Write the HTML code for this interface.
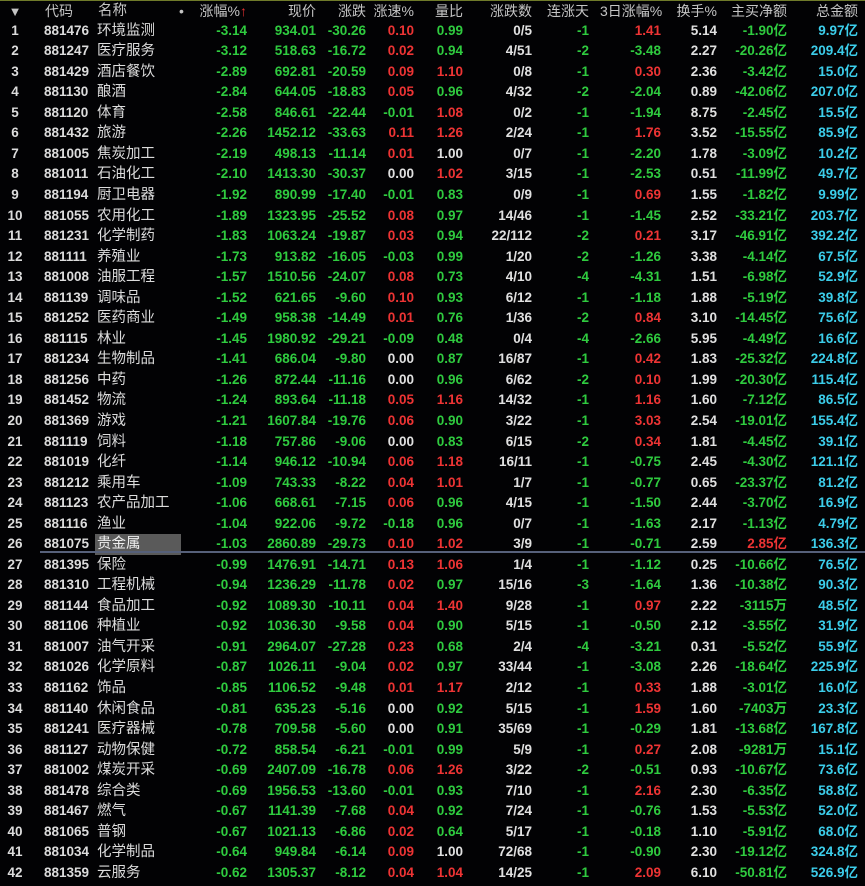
<!DOCTYPE html>
<html><head><meta charset="utf-8"><style>
*{margin:0;padding:0;box-sizing:border-box}
body{width:865px;height:886px;background:#020204;overflow:hidden;position:relative;font-family:"Liberation Sans","Noto Sans CJK SC",sans-serif;font-size:13.5px;color:#dcdcdc}
.top{position:absolute;left:0;top:0;width:865px;height:1px;background:#6f7a2a}
.r{position:absolute;left:0;width:865px;height:20.54px;line-height:20.54px;white-space:nowrap;font-weight:bold}
.r span{position:absolute;top:0;text-align:right}
.h{top:1px;height:21px;line-height:21px;color:#c4c4c4;font-size:14px;font-weight:normal}
.a{left:4px;width:22px;text-align:center!important}
.b{left:44px}
.c{left:97px;text-align:left!important;font-size:14.5px;font-weight:normal}
.d{left:187px;width:60px}.e{left:256px;width:60px}.f{left:316px;width:50px}.g{left:366px;width:48px}
.hh{left:414px;width:49px}.i{left:470px;width:62px}.j{left:540px;width:49px}.k{left:600px;width:61px}
.l{left:665px;width:52px}.m{left:715px;width:72px}.n{left:785px;width:73px}
.G{color:#2fcb3f}.R{color:#ee3434}.W{color:#e0e0e0}.C{color:#3ccdea}
.sel{background:#5a5a5a;color:#eee;width:86px;left:95px!important;padding-left:2px}
.sep{position:absolute;left:40px;top:551px;width:825px;height:2px;background:#56607a}
</style></head><body>
<div class="top"></div>
<div class="r h"><span class="a" style="font-size:13px">▼</span><span class="b" style="left:45px">代码</span><span class="c" style="left:98px">名称</span><span style="left:179px">•</span><span class="d">涨幅%<b style="color:#e03030">↑</b></span><span class="e">现价</span><span class="f">涨跌</span><span class="g">涨速%</span><span class="hh">量比</span><span class="i">涨跌数</span><span class="j">连涨天</span><span class="k">3日涨幅%</span><span class="l">换手%</span><span class="m">主买净额</span><span class="n">总金额</span></div>
<div class="r" style="top:20.7px"><span class="a">1</span><span class="b">881476</span><span class="c">环境监测</span><span class="d G">-3.14</span><span class="e G">934.01</span><span class="f G">-30.26</span><span class="g R">0.10</span><span class="hh G">0.99</span><span class="i W">0/5</span><span class="j G">-1</span><span class="k R">1.41</span><span class="l W">5.14</span><span class="m G">-1.90亿</span><span class="n C">9.97亿</span></div>
<div class="r" style="top:41.24px"><span class="a">2</span><span class="b">881247</span><span class="c">医疗服务</span><span class="d G">-3.12</span><span class="e G">518.63</span><span class="f G">-16.72</span><span class="g R">0.02</span><span class="hh G">0.94</span><span class="i W">4/51</span><span class="j G">-2</span><span class="k G">-3.48</span><span class="l W">2.27</span><span class="m G">-20.26亿</span><span class="n C">209.4亿</span></div>
<div class="r" style="top:61.78px"><span class="a">3</span><span class="b">881429</span><span class="c">酒店餐饮</span><span class="d G">-2.89</span><span class="e G">692.81</span><span class="f G">-20.59</span><span class="g R">0.09</span><span class="hh R">1.10</span><span class="i W">0/8</span><span class="j G">-1</span><span class="k R">0.30</span><span class="l W">2.36</span><span class="m G">-3.42亿</span><span class="n C">15.0亿</span></div>
<div class="r" style="top:82.32px"><span class="a">4</span><span class="b">881130</span><span class="c">酿酒</span><span class="d G">-2.84</span><span class="e G">644.05</span><span class="f G">-18.83</span><span class="g R">0.05</span><span class="hh G">0.96</span><span class="i W">4/32</span><span class="j G">-2</span><span class="k G">-2.04</span><span class="l W">0.89</span><span class="m G">-42.06亿</span><span class="n C">207.0亿</span></div>
<div class="r" style="top:102.86px"><span class="a">5</span><span class="b">881120</span><span class="c">体育</span><span class="d G">-2.58</span><span class="e G">846.61</span><span class="f G">-22.44</span><span class="g G">-0.01</span><span class="hh R">1.08</span><span class="i W">0/2</span><span class="j G">-1</span><span class="k G">-1.94</span><span class="l W">8.75</span><span class="m G">-2.45亿</span><span class="n C">15.5亿</span></div>
<div class="r" style="top:123.4px"><span class="a">6</span><span class="b">881432</span><span class="c">旅游</span><span class="d G">-2.26</span><span class="e G">1452.12</span><span class="f G">-33.63</span><span class="g R">0.11</span><span class="hh R">1.26</span><span class="i W">2/24</span><span class="j G">-1</span><span class="k R">1.76</span><span class="l W">3.52</span><span class="m G">-15.55亿</span><span class="n C">85.9亿</span></div>
<div class="r" style="top:143.94px"><span class="a">7</span><span class="b">881005</span><span class="c">焦炭加工</span><span class="d G">-2.19</span><span class="e G">498.13</span><span class="f G">-11.14</span><span class="g R">0.01</span><span class="hh W">1.00</span><span class="i W">0/7</span><span class="j G">-1</span><span class="k G">-2.20</span><span class="l W">1.78</span><span class="m G">-3.09亿</span><span class="n C">10.2亿</span></div>
<div class="r" style="top:164.48px"><span class="a">8</span><span class="b">881011</span><span class="c">石油化工</span><span class="d G">-2.10</span><span class="e G">1413.30</span><span class="f G">-30.37</span><span class="g W">0.00</span><span class="hh R">1.02</span><span class="i W">3/15</span><span class="j G">-1</span><span class="k G">-2.53</span><span class="l W">0.51</span><span class="m G">-11.99亿</span><span class="n C">49.7亿</span></div>
<div class="r" style="top:185.02px"><span class="a">9</span><span class="b">881194</span><span class="c">厨卫电器</span><span class="d G">-1.92</span><span class="e G">890.99</span><span class="f G">-17.40</span><span class="g G">-0.01</span><span class="hh G">0.83</span><span class="i W">0/9</span><span class="j G">-1</span><span class="k R">0.69</span><span class="l W">1.55</span><span class="m G">-1.82亿</span><span class="n C">9.99亿</span></div>
<div class="r" style="top:205.56px"><span class="a">10</span><span class="b">881055</span><span class="c">农用化工</span><span class="d G">-1.89</span><span class="e G">1323.95</span><span class="f G">-25.52</span><span class="g R">0.08</span><span class="hh G">0.97</span><span class="i W">14/46</span><span class="j G">-1</span><span class="k G">-1.45</span><span class="l W">2.52</span><span class="m G">-33.21亿</span><span class="n C">203.7亿</span></div>
<div class="r" style="top:226.1px"><span class="a">11</span><span class="b">881231</span><span class="c">化学制药</span><span class="d G">-1.83</span><span class="e G">1063.24</span><span class="f G">-19.87</span><span class="g R">0.03</span><span class="hh G">0.94</span><span class="i W">22/112</span><span class="j G">-2</span><span class="k R">0.21</span><span class="l W">3.17</span><span class="m G">-46.91亿</span><span class="n C">392.2亿</span></div>
<div class="r" style="top:246.64px"><span class="a">12</span><span class="b">881111</span><span class="c">养殖业</span><span class="d G">-1.73</span><span class="e G">913.82</span><span class="f G">-16.05</span><span class="g G">-0.03</span><span class="hh G">0.99</span><span class="i W">1/20</span><span class="j G">-2</span><span class="k G">-1.26</span><span class="l W">3.38</span><span class="m G">-4.14亿</span><span class="n C">67.5亿</span></div>
<div class="r" style="top:267.18px"><span class="a">13</span><span class="b">881008</span><span class="c">油服工程</span><span class="d G">-1.57</span><span class="e G">1510.56</span><span class="f G">-24.07</span><span class="g R">0.08</span><span class="hh G">0.73</span><span class="i W">4/10</span><span class="j G">-4</span><span class="k G">-4.31</span><span class="l W">1.51</span><span class="m G">-6.98亿</span><span class="n C">52.9亿</span></div>
<div class="r" style="top:287.72px"><span class="a">14</span><span class="b">881139</span><span class="c">调味品</span><span class="d G">-1.52</span><span class="e G">621.65</span><span class="f G">-9.60</span><span class="g R">0.10</span><span class="hh G">0.93</span><span class="i W">6/12</span><span class="j G">-1</span><span class="k G">-1.18</span><span class="l W">1.88</span><span class="m G">-5.19亿</span><span class="n C">39.8亿</span></div>
<div class="r" style="top:308.26px"><span class="a">15</span><span class="b">881252</span><span class="c">医药商业</span><span class="d G">-1.49</span><span class="e G">958.38</span><span class="f G">-14.49</span><span class="g R">0.01</span><span class="hh G">0.76</span><span class="i W">1/36</span><span class="j G">-2</span><span class="k R">0.84</span><span class="l W">3.10</span><span class="m G">-14.45亿</span><span class="n C">75.6亿</span></div>
<div class="r" style="top:328.8px"><span class="a">16</span><span class="b">881115</span><span class="c">林业</span><span class="d G">-1.45</span><span class="e G">1980.92</span><span class="f G">-29.21</span><span class="g G">-0.09</span><span class="hh G">0.48</span><span class="i W">0/4</span><span class="j G">-4</span><span class="k G">-2.66</span><span class="l W">5.95</span><span class="m G">-4.49亿</span><span class="n C">16.6亿</span></div>
<div class="r" style="top:349.34px"><span class="a">17</span><span class="b">881234</span><span class="c">生物制品</span><span class="d G">-1.41</span><span class="e G">686.04</span><span class="f G">-9.80</span><span class="g W">0.00</span><span class="hh G">0.87</span><span class="i W">16/87</span><span class="j G">-1</span><span class="k R">0.42</span><span class="l W">1.83</span><span class="m G">-25.32亿</span><span class="n C">224.8亿</span></div>
<div class="r" style="top:369.88px"><span class="a">18</span><span class="b">881256</span><span class="c">中药</span><span class="d G">-1.26</span><span class="e G">872.44</span><span class="f G">-11.16</span><span class="g W">0.00</span><span class="hh G">0.96</span><span class="i W">6/62</span><span class="j G">-2</span><span class="k R">0.10</span><span class="l W">1.99</span><span class="m G">-20.30亿</span><span class="n C">115.4亿</span></div>
<div class="r" style="top:390.42px"><span class="a">19</span><span class="b">881452</span><span class="c">物流</span><span class="d G">-1.24</span><span class="e G">893.64</span><span class="f G">-11.18</span><span class="g R">0.05</span><span class="hh R">1.16</span><span class="i W">14/32</span><span class="j G">-1</span><span class="k R">1.16</span><span class="l W">1.60</span><span class="m G">-7.12亿</span><span class="n C">86.5亿</span></div>
<div class="r" style="top:410.96px"><span class="a">20</span><span class="b">881369</span><span class="c">游戏</span><span class="d G">-1.21</span><span class="e G">1607.84</span><span class="f G">-19.76</span><span class="g R">0.06</span><span class="hh G">0.90</span><span class="i W">3/22</span><span class="j G">-1</span><span class="k R">3.03</span><span class="l W">2.54</span><span class="m G">-19.01亿</span><span class="n C">155.4亿</span></div>
<div class="r" style="top:431.5px"><span class="a">21</span><span class="b">881119</span><span class="c">饲料</span><span class="d G">-1.18</span><span class="e G">757.86</span><span class="f G">-9.06</span><span class="g W">0.00</span><span class="hh G">0.83</span><span class="i W">6/15</span><span class="j G">-2</span><span class="k R">0.34</span><span class="l W">1.81</span><span class="m G">-4.45亿</span><span class="n C">39.1亿</span></div>
<div class="r" style="top:452.04px"><span class="a">22</span><span class="b">881019</span><span class="c">化纤</span><span class="d G">-1.14</span><span class="e G">946.12</span><span class="f G">-10.94</span><span class="g R">0.06</span><span class="hh R">1.18</span><span class="i W">16/11</span><span class="j G">-1</span><span class="k G">-0.75</span><span class="l W">2.45</span><span class="m G">-4.30亿</span><span class="n C">121.1亿</span></div>
<div class="r" style="top:472.58px"><span class="a">23</span><span class="b">881212</span><span class="c">乘用车</span><span class="d G">-1.09</span><span class="e G">743.33</span><span class="f G">-8.22</span><span class="g R">0.04</span><span class="hh R">1.01</span><span class="i W">1/7</span><span class="j G">-1</span><span class="k G">-0.77</span><span class="l W">0.65</span><span class="m G">-23.37亿</span><span class="n C">81.2亿</span></div>
<div class="r" style="top:493.12px"><span class="a">24</span><span class="b">881123</span><span class="c">农产品加工</span><span class="d G">-1.06</span><span class="e G">668.61</span><span class="f G">-7.15</span><span class="g R">0.06</span><span class="hh G">0.96</span><span class="i W">4/15</span><span class="j G">-1</span><span class="k G">-1.50</span><span class="l W">2.44</span><span class="m G">-3.70亿</span><span class="n C">16.9亿</span></div>
<div class="r" style="top:513.66px"><span class="a">25</span><span class="b">881116</span><span class="c">渔业</span><span class="d G">-1.04</span><span class="e G">922.06</span><span class="f G">-9.72</span><span class="g G">-0.18</span><span class="hh G">0.96</span><span class="i W">0/7</span><span class="j G">-1</span><span class="k G">-1.63</span><span class="l W">2.17</span><span class="m G">-1.13亿</span><span class="n C">4.79亿</span></div>
<div class="r" style="top:534.2px"><span class="a">26</span><span class="b">881075</span><span class="c sel">贵金属</span><span class="d G">-1.03</span><span class="e G">2860.89</span><span class="f G">-29.73</span><span class="g R">0.10</span><span class="hh R">1.02</span><span class="i W">3/9</span><span class="j G">-1</span><span class="k G">-0.71</span><span class="l W">2.59</span><span class="m R">2.85亿</span><span class="n C">136.3亿</span></div>
<div class="sep"></div>
<div class="r" style="top:554.74px"><span class="a">27</span><span class="b">881395</span><span class="c">保险</span><span class="d G">-0.99</span><span class="e G">1476.91</span><span class="f G">-14.71</span><span class="g R">0.13</span><span class="hh R">1.06</span><span class="i W">1/4</span><span class="j G">-1</span><span class="k G">-1.12</span><span class="l W">0.25</span><span class="m G">-10.66亿</span><span class="n C">76.5亿</span></div>
<div class="r" style="top:575.28px"><span class="a">28</span><span class="b">881310</span><span class="c">工程机械</span><span class="d G">-0.94</span><span class="e G">1236.29</span><span class="f G">-11.78</span><span class="g R">0.02</span><span class="hh G">0.97</span><span class="i W">15/16</span><span class="j G">-3</span><span class="k G">-1.64</span><span class="l W">1.36</span><span class="m G">-10.38亿</span><span class="n C">90.3亿</span></div>
<div class="r" style="top:595.82px"><span class="a">29</span><span class="b">881144</span><span class="c">食品加工</span><span class="d G">-0.92</span><span class="e G">1089.30</span><span class="f G">-10.11</span><span class="g R">0.04</span><span class="hh R">1.40</span><span class="i W">9/28</span><span class="j G">-1</span><span class="k R">0.97</span><span class="l W">2.22</span><span class="m G">-3115万</span><span class="n C">48.5亿</span></div>
<div class="r" style="top:616.36px"><span class="a">30</span><span class="b">881106</span><span class="c">种植业</span><span class="d G">-0.92</span><span class="e G">1036.30</span><span class="f G">-9.58</span><span class="g R">0.04</span><span class="hh G">0.90</span><span class="i W">5/15</span><span class="j G">-1</span><span class="k G">-0.50</span><span class="l W">2.12</span><span class="m G">-3.55亿</span><span class="n C">31.9亿</span></div>
<div class="r" style="top:636.9px"><span class="a">31</span><span class="b">881007</span><span class="c">油气开采</span><span class="d G">-0.91</span><span class="e G">2964.07</span><span class="f G">-27.28</span><span class="g R">0.23</span><span class="hh G">0.68</span><span class="i W">2/4</span><span class="j G">-4</span><span class="k G">-3.21</span><span class="l W">0.31</span><span class="m G">-5.52亿</span><span class="n C">55.9亿</span></div>
<div class="r" style="top:657.44px"><span class="a">32</span><span class="b">881026</span><span class="c">化学原料</span><span class="d G">-0.87</span><span class="e G">1026.11</span><span class="f G">-9.04</span><span class="g R">0.02</span><span class="hh G">0.97</span><span class="i W">33/44</span><span class="j G">-1</span><span class="k G">-3.08</span><span class="l W">2.26</span><span class="m G">-18.64亿</span><span class="n C">225.9亿</span></div>
<div class="r" style="top:677.98px"><span class="a">33</span><span class="b">881162</span><span class="c">饰品</span><span class="d G">-0.85</span><span class="e G">1106.52</span><span class="f G">-9.48</span><span class="g R">0.01</span><span class="hh R">1.17</span><span class="i W">2/12</span><span class="j G">-1</span><span class="k R">0.33</span><span class="l W">1.88</span><span class="m G">-3.01亿</span><span class="n C">16.0亿</span></div>
<div class="r" style="top:698.52px"><span class="a">34</span><span class="b">881140</span><span class="c">休闲食品</span><span class="d G">-0.81</span><span class="e G">635.23</span><span class="f G">-5.16</span><span class="g W">0.00</span><span class="hh G">0.92</span><span class="i W">5/15</span><span class="j G">-1</span><span class="k R">1.59</span><span class="l W">1.60</span><span class="m G">-7403万</span><span class="n C">23.3亿</span></div>
<div class="r" style="top:719.06px"><span class="a">35</span><span class="b">881241</span><span class="c">医疗器械</span><span class="d G">-0.78</span><span class="e G">709.58</span><span class="f G">-5.60</span><span class="g W">0.00</span><span class="hh G">0.91</span><span class="i W">35/69</span><span class="j G">-1</span><span class="k G">-0.29</span><span class="l W">1.81</span><span class="m G">-13.68亿</span><span class="n C">167.8亿</span></div>
<div class="r" style="top:739.6px"><span class="a">36</span><span class="b">881127</span><span class="c">动物保健</span><span class="d G">-0.72</span><span class="e G">858.54</span><span class="f G">-6.21</span><span class="g G">-0.01</span><span class="hh G">0.99</span><span class="i W">5/9</span><span class="j G">-1</span><span class="k R">0.27</span><span class="l W">2.08</span><span class="m G">-9281万</span><span class="n C">15.1亿</span></div>
<div class="r" style="top:760.14px"><span class="a">37</span><span class="b">881002</span><span class="c">煤炭开采</span><span class="d G">-0.69</span><span class="e G">2407.09</span><span class="f G">-16.78</span><span class="g R">0.06</span><span class="hh R">1.26</span><span class="i W">3/22</span><span class="j G">-2</span><span class="k G">-0.51</span><span class="l W">0.93</span><span class="m G">-10.67亿</span><span class="n C">73.6亿</span></div>
<div class="r" style="top:780.68px"><span class="a">38</span><span class="b">881478</span><span class="c">综合类</span><span class="d G">-0.69</span><span class="e G">1956.53</span><span class="f G">-13.60</span><span class="g G">-0.01</span><span class="hh G">0.93</span><span class="i W">7/10</span><span class="j G">-1</span><span class="k R">2.16</span><span class="l W">2.30</span><span class="m G">-6.35亿</span><span class="n C">58.8亿</span></div>
<div class="r" style="top:801.22px"><span class="a">39</span><span class="b">881467</span><span class="c">燃气</span><span class="d G">-0.67</span><span class="e G">1141.39</span><span class="f G">-7.68</span><span class="g R">0.04</span><span class="hh G">0.92</span><span class="i W">7/24</span><span class="j G">-1</span><span class="k G">-0.76</span><span class="l W">1.53</span><span class="m G">-5.53亿</span><span class="n C">52.0亿</span></div>
<div class="r" style="top:821.76px"><span class="a">40</span><span class="b">881065</span><span class="c">普钢</span><span class="d G">-0.67</span><span class="e G">1021.13</span><span class="f G">-6.86</span><span class="g R">0.02</span><span class="hh G">0.64</span><span class="i W">5/17</span><span class="j G">-1</span><span class="k G">-0.18</span><span class="l W">1.10</span><span class="m G">-5.91亿</span><span class="n C">68.0亿</span></div>
<div class="r" style="top:842.3px"><span class="a">41</span><span class="b">881034</span><span class="c">化学制品</span><span class="d G">-0.64</span><span class="e G">949.84</span><span class="f G">-6.14</span><span class="g R">0.09</span><span class="hh W">1.00</span><span class="i W">72/68</span><span class="j G">-1</span><span class="k G">-0.90</span><span class="l W">2.30</span><span class="m G">-19.12亿</span><span class="n C">324.8亿</span></div>
<div class="r" style="top:862.84px"><span class="a">42</span><span class="b">881359</span><span class="c">云服务</span><span class="d G">-0.62</span><span class="e G">1305.37</span><span class="f G">-8.12</span><span class="g R">0.04</span><span class="hh R">1.04</span><span class="i W">14/25</span><span class="j G">-1</span><span class="k R">2.09</span><span class="l W">6.10</span><span class="m G">-50.81亿</span><span class="n C">526.9亿</span></div>
</body></html>
